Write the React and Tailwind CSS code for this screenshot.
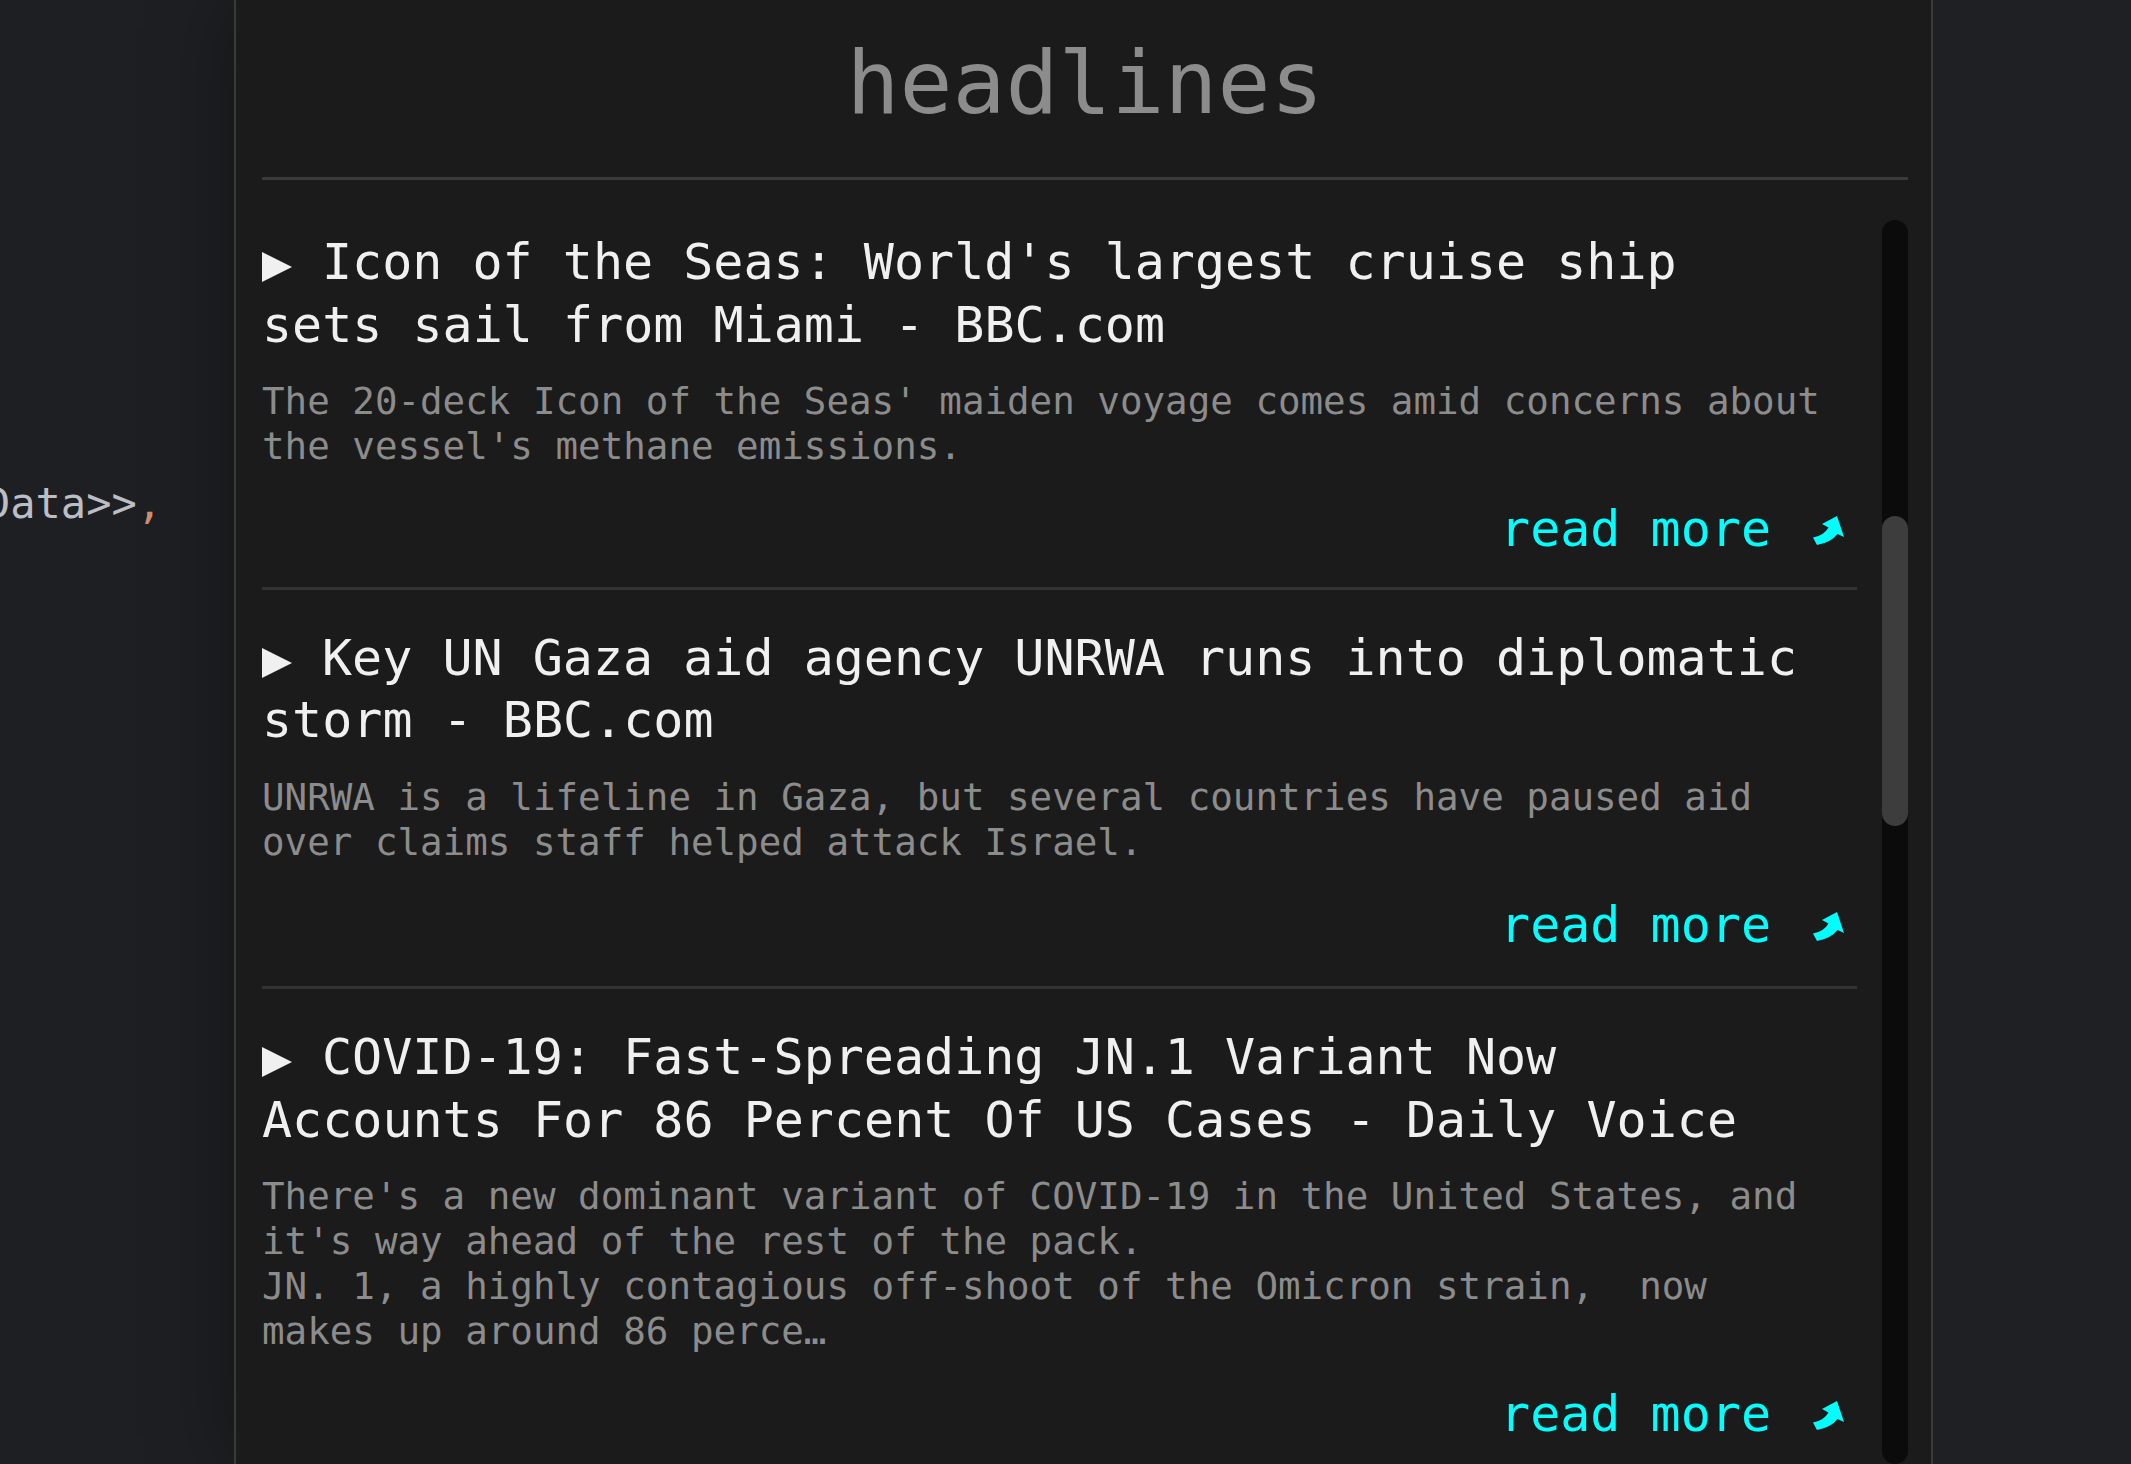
const articles = [
  {
    title: "Icon of the Seas: World's largest cruise ship sets sail from Miami - BBC.com",
    description:
      "The 20-deck Icon of the Seas' maiden voyage comes amid concerns about the vessel's methane emissions.",
  },
  {
    title: "Key UN Gaza aid agency UNRWA runs into diplomatic storm - BBC.com",
    description:
      "UNRWA is a lifeline in Gaza, but several countries have paused aid over claims staff helped attack Israel.",
  },
  {
    title:
      "COVID-19: Fast-Spreading JN.1 Variant Now Accounts For 86 Percent Of US Cases - Daily Voice",
    description:
      "There's a new dominant variant of COVID-19 in the United States, and it's way ahead of the rest of the pack.\nJN. 1, a highly contagious off-shoot of the Omicron strain,  now makes up around 86 perce…",
  },
];

function Triangle() {
  return (
    <svg
      viewBox="0 0 30 30"
      className="mr-[30px] inline-block h-[30px] w-[30px] align-[-3px]"
    >
      <path d="M0 0 L30 15 L0 30 Z" fill="#f0f0f0" />
    </svg>
  );
}

function ArrowIcon() {
  return (
    <svg viewBox="0 0 31 29" className="ml-[42px] mt-[3px] h-[29px] w-[31px] shrink-0">
      <path
        d="M24 0 L31 21 L24.5 18 Q18 26.5 4 29 L0 21.5 Q11 19.5 15.5 11.5 L9 8 Z"
        fill="#00ffff"
      />
    </svg>
  );
}

function Article({ title, description }) {
  return (
    <li className="border-b-[3px] border-[#333333] pb-[30px] pt-[37px] first:pb-[26px] first:pt-[11px]">
      <h2 className="pr-[35px] text-[50px] leading-[62.5px] text-[#f0f0f0]">
        <Triangle />
        {title}
      </h2>
      <p className="mt-[23px] whitespace-pre-wrap pr-[35px] text-[37.5px] leading-[45px] text-[#8c8c8c]">
        {description}
      </p>
      <div className="mt-[29px] flex items-center justify-end pr-[13px] text-[50px] leading-[62.5px] text-[#00ffff]">
        <span>read more</span>
        <ArrowIcon />
      </div>
    </li>
  );
}

export default function App() {
  return (
    <div className="flex h-[1464px] w-full overflow-hidden bg-[#1e1f22] font-['DejaVu_Sans_Mono',monospace]">
      {/* editor peeking out on the left */}
      <div className="w-[234px] shrink-0 overflow-hidden pt-[473px]">
        <div className="-ml-[15px] whitespace-nowrap text-[42px] leading-[61.5px] text-[#bcbec4]">
          Data&gt;&gt;<span className="text-[#cf8e6d]">,</span>
        </div>
      </div>

      {/* headlines panel */}
      <main className="flex w-[1699px] shrink-0 flex-col border-x-2 border-[#3a3a3a] bg-[#1b1b1b] pl-[26px] pr-[23px] shadow-[0_0_80px_rgba(0,0,0,0.35)]">
        <header className="pt-[31px]">
          <h1 className="mb-[42px] text-center text-[88px] leading-[104px] text-[#8c8c8c]">
            headlines
          </h1>
          <div className="h-[3px] bg-[#3a3a3a]" />
        </header>

        <div className="flex min-h-0 flex-1 pt-[40px]">
          <ul className="min-w-0 flex-1 overflow-hidden pr-[25px]">
            {articles.map((a) => (
              <Article key={a.title} {...a} />
            ))}
          </ul>
          <div className="flex w-[26px] shrink-0 flex-col rounded-full bg-[#0b0b0b]">
            <div className="h-[296px]" />
            <div className="h-[310px] rounded-full bg-[#3d3d3d]" />
          </div>
        </div>
      </main>

      <div className="flex-1 bg-[#1f2023]" />
    </div>
  );
}
